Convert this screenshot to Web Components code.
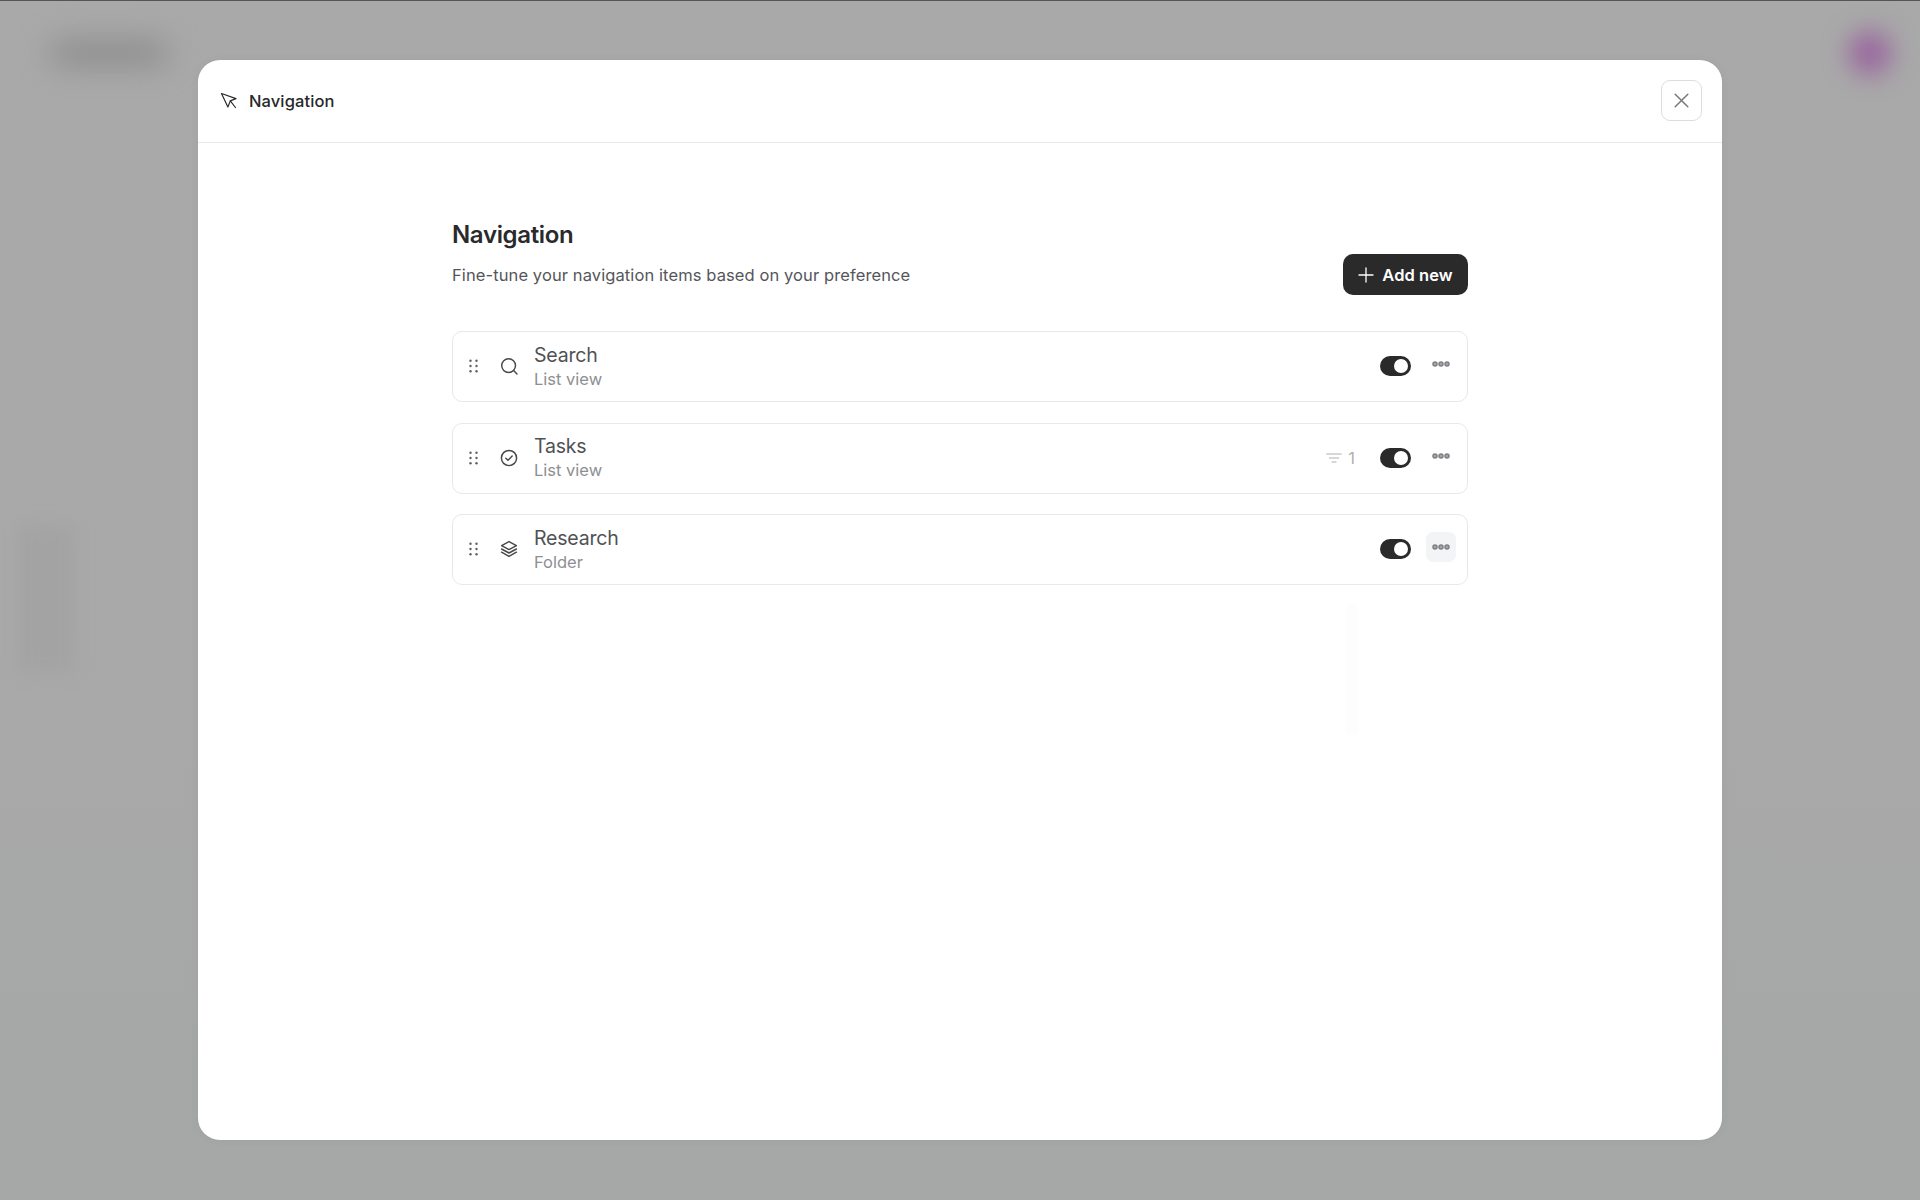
<!DOCTYPE html>
<html>
<head>
<meta charset="utf-8">
<title>Navigation</title>
<style>
    html, body { margin: 0; height: 100%; }
    body { font-family: Inter, "Liberation Sans", sans-serif; }
</style>
</head>
<body>
<app-backdrop>
    <nav-modal heading="Navigation">
        <nav-section heading="Navigation" description="Fine-tune your navigation items based on your preference">
            <nav-item label="Search" kind="List view" icon="search"></nav-item>
            <nav-item label="Tasks" kind="List view" icon="check" filters="1"></nav-item>
            <nav-item label="Research" kind="Folder" icon="layers" active></nav-item>
        </nav-section>
    </nav-modal>
</app-backdrop>

<script>
const $backdrop = document.createElement('template');
$backdrop.innerHTML = /*html*/ `
    <style>
        :host {
            display: block;
            position: relative;
            height: 1200px;
            overflow: hidden;
            background: linear-gradient(#a9a9a9, #a9a9a9 50%, #a6a7a7);
            border-top: 1px solid #555;
            box-sizing: border-box;
        }
        .blob { position: absolute; }
        #logo { left: 50px; top: 40px; width: 118px; height: 24px; background: #8b8b8b; filter: blur(15px); border-radius: 12px; }
        #avatar { left: 1848px; top: 29px; width: 44px; height: 46px; background: #9a6a9f; filter: blur(12px); border-radius: 50%; }
        #side { left: 18px; top: 525px; width: 56px; height: 145px; background: #a3a3a3; filter: blur(9px); }
        #wrap {
            position: relative;
            height: 100%;
            display: flex;
            justify-content: center;
            padding-top: 59px;
            box-sizing: border-box;
        }
    </style>
    <div class="blob" id="logo"></div>
    <div class="blob" id="avatar"></div>
    <div class="blob" id="side"></div>
    <div id="wrap"><slot></slot></div>
`;

class AppBackdrop extends HTMLElement {
    constructor() {
        super();
        this.attachShadow({mode: 'open'});
        this.shadowRoot.appendChild($backdrop.content.cloneNode(true));
    }
}
window.customElements.define('app-backdrop', AppBackdrop);

const $modal = document.createElement('template');
$modal.innerHTML = /*html*/ `
    <style>
        :host {
            display: flex;
            flex-direction: column;
            position: relative;
            width: 1524px;
            height: 1080px;
            background: #ffffff;
            border-radius: 22px;
            box-shadow: 0 0 10px rgba(0, 0, 0, 0.05);
            overflow: hidden;
        }
        #bar {
            height: 83px;
            flex: none;
            box-sizing: border-box;
            border-bottom: 1px solid #e9e9ea;
            display: flex;
            align-items: center;
            padding: 0 20px 0 22px;
        }
        #bar svg.cursor { width: 18px; height: 18px; margin-right: 11px; margin-top: -1px; }
        #title {
            flex: 1;
            font-size: 16.5px;
            font-weight: 500;
            color: #28282a;
            letter-spacing: 0.1px;
        }
        #close {
            width: 41px;
            height: 41px;
            box-sizing: border-box;
            border: 1.5px solid #dcdde2;
            border-radius: 9px;
            display: flex;
            align-items: center;
            justify-content: center;
            margin-top: -1px;
        }
        #content {
            flex: 1;
            display: flex;
            justify-content: center;
            padding-top: 77px;
        }
        /* faint leftover of the closed menu */
        #ghost {
            position: absolute;
            left: 1148px;
            top: 545px;
            width: 12px;
            height: 130px;
            background: #fdfdfd;
        }
    </style>
    <div id="bar">
        <svg class="cursor" viewBox="0 0 18 18" fill="none" stroke="#2a2a2c" stroke-width="1.2" stroke-linejoin="round" stroke-linecap="round">
            <path d="M1.5 1.5 L16 6.6 L10.3 8.9 L7.9 15 Z"/>
            <path d="M10.3 8.9 L15.5 15.5"/>
        </svg>
        <div id="title"></div>
        <div id="close">
            <svg width="15" height="15" viewBox="0 0 15 15" fill="none" stroke="#77787c" stroke-width="1.5" stroke-linecap="round">
                <path d="M1.2 1.2 L13.8 13.8 M13.8 1.2 L1.2 13.8"/>
            </svg>
        </div>
    </div>
    <div id="content"><slot></slot></div>
    <div id="ghost"></div>
`;

class NavModal extends HTMLElement {
    constructor() {
        super();
        this.attachShadow({mode: 'open'});
        this.shadowRoot.appendChild($modal.content.cloneNode(true));
        this.shadowRoot.getElementById('title').textContent = this.getAttribute('heading');
    }
}
window.customElements.define('nav-modal', NavModal);

const $section = document.createElement('template');
$section.innerHTML = /*html*/ `
    <style>
        :host {
            display: flex;
            flex-direction: column;
            width: 1016px;
        }
        h2 {
            margin: 0;
            font-size: 24px;
            line-height: 30px;
            font-weight: 600;
            color: #2a2a2c;
            letter-spacing: -0.35px;
        }
        #sub {
            display: flex;
            align-items: center;
            justify-content: space-between;
            margin-top: 4px;
        }
        #desc {
            font-size: 16.5px;
            color: #55565a;
            letter-spacing: 0.1px;
        }
        #add {
            height: 41px;
            width: 125px;
            box-sizing: border-box;
            background: #2a2a2b;
            color: #ffffff;
            border-radius: 10px;
            display: flex;
            align-items: center;
            justify-content: center;
            gap: 8px;
            font-size: 16.5px;
            font-weight: 600;
            letter-spacing: 0.05px;
        }
        #list {
            display: flex;
            flex-direction: column;
            gap: 20.5px;
            margin-top: 36px;
        }
    </style>
    <h2 id="heading"></h2>
    <div id="sub">
        <div id="desc"></div>
        <div id="add">
            <svg width="16" height="16" viewBox="0 0 16 16" fill="none" stroke="#fff" stroke-width="1.3" stroke-linecap="round">
                <path d="M8 1 V15 M1 8 H15"/>
            </svg>
            <span>Add new</span>
        </div>
    </div>
    <div id="list"><slot></slot></div>
`;

class NavSection extends HTMLElement {
    constructor() {
        super();
        this.attachShadow({mode: 'open'});
        this.shadowRoot.appendChild($section.content.cloneNode(true));
        this.shadowRoot.getElementById('heading').textContent = this.getAttribute('heading');
        this.shadowRoot.getElementById('desc').textContent = this.getAttribute('description');
    }
}
window.customElements.define('nav-section', NavSection);

const ICONS = {
    search: `<circle cx="8.6" cy="8.6" r="6.9"/><path d="M13.6 13.6 L17 17"/>`,
    check: `<circle cx="9" cy="9" r="7.6"/><path d="M5.8 9.3 L8 11.3 L12.2 7"/>`,
    layers: `<path d="M9 1.6 L16.4 5.6 L9 9.6 L1.6 5.6 Z"/><path d="M1.6 9 L9 13 L16.4 9"/><path d="M1.6 12.2 L9 16.4 L16.4 12.2"/>`
};

const $item = document.createElement('template');
$item.innerHTML = /*html*/ `
    <style>
        :host {
            display: flex;
            align-items: center;
            height: 71px;
            box-sizing: border-box;
            border: 1.5px solid #e8e8e9;
            border-radius: 10px;
            padding: 0 11px 0 16px;
            background: #fff;
        }
        #grip { width: 10px; height: 14px; flex: none; margin: -1px 21px 0 0; }
        #icon { width: 18px; height: 18px; flex: none; margin: -1px 16px 0 0; }
        #text { flex: 1; display: flex; flex-direction: column; margin-top: -1px; }
        #label {
            font-size: 19.5px;
            line-height: 25px;
            color: #505154;
            letter-spacing: -0.2px;
        }
        #kind {
            font-size: 16.5px;
            line-height: 22px;
            color: #8e8f92;
            letter-spacing: 0;
        }
        #filter {
            display: flex;
            align-items: center;
            gap: 6px;
            margin-right: 25px;
            font-size: 16.5px;
            color: #aeafb1;
        }
        #toggle {
            width: 31px;
            height: 20px;
            border-radius: 10px;
            background: #2a2a2b;
            flex: none;
            display: flex;
            align-items: center;
            justify-content: flex-end;
            padding-right: 3.5px;
            box-sizing: border-box;
            margin: -1px 15px 0 0;
        }
        #toggle i { width: 14px; height: 14px; border-radius: 50%; background: #fff; display: block; }
        #more {
            width: 30px;
            height: 30px;
            border-radius: 7px;
            flex: none;
            display: flex;
            align-items: center;
            justify-content: center;
            margin-top: -5px;
        }
        :host([active]) #more { background: #f3f4f6; }
    </style>
    <svg id="grip" viewBox="0 0 10 14" fill="#5f6063">
        <circle cx="1.5" cy="1.8" r="1.2"/><circle cx="7.5" cy="1.8" r="1.2"/>
        <circle cx="1.5" cy="7" r="1.2"/><circle cx="7.5" cy="7" r="1.2"/>
        <circle cx="1.5" cy="12.2" r="1.2"/><circle cx="7.5" cy="12.2" r="1.2"/>
    </svg>
    <svg id="icon" viewBox="0 0 18 18" fill="none" stroke="#47484b" stroke-width="1.45" stroke-linecap="round" stroke-linejoin="round"></svg>
    <div id="text">
        <div id="label"></div>
        <div id="kind"></div>
    </div>
    <div id="filter">
        <svg width="16" height="10" viewBox="0 0 16 10" fill="none" stroke="#aeafb1" stroke-width="1.2" stroke-linecap="round">
            <path d="M0.7 1 H15.3 M3.5 5 H12.5 M6 9 H10"/>
        </svg>
        <span id="count"></span>
    </div>
    <div id="toggle"><i></i></div>
    <div id="more">
        <svg width="18" height="6" viewBox="0 0 18 6" fill="#a5a6a9" stroke="#7f8084" stroke-width="1.5">
            <circle cx="3" cy="3" r="2"/><circle cx="9" cy="3" r="2"/><circle cx="15" cy="3" r="2"/>
        </svg>
    </div>
`;

class NavItem extends HTMLElement {
    constructor() {
        super();
        this.attachShadow({mode: 'open'});
        this.shadowRoot.appendChild($item.content.cloneNode(true));

        this.$filter = this.shadowRoot.getElementById('filter');
        this.shadowRoot.getElementById('label').textContent = this.getAttribute('label');
        this.shadowRoot.getElementById('kind').textContent = this.getAttribute('kind');
        this.shadowRoot.getElementById('icon').innerHTML = ICONS[this.getAttribute('icon')];

        if (this.hasAttribute('filters')) {
            this.shadowRoot.getElementById('count').textContent = this.getAttribute('filters');
        } else {
            this.$filter.style.display = 'none';
        }
    }
}
window.customElements.define('nav-item', NavItem);
</script>
</body>
</html>
